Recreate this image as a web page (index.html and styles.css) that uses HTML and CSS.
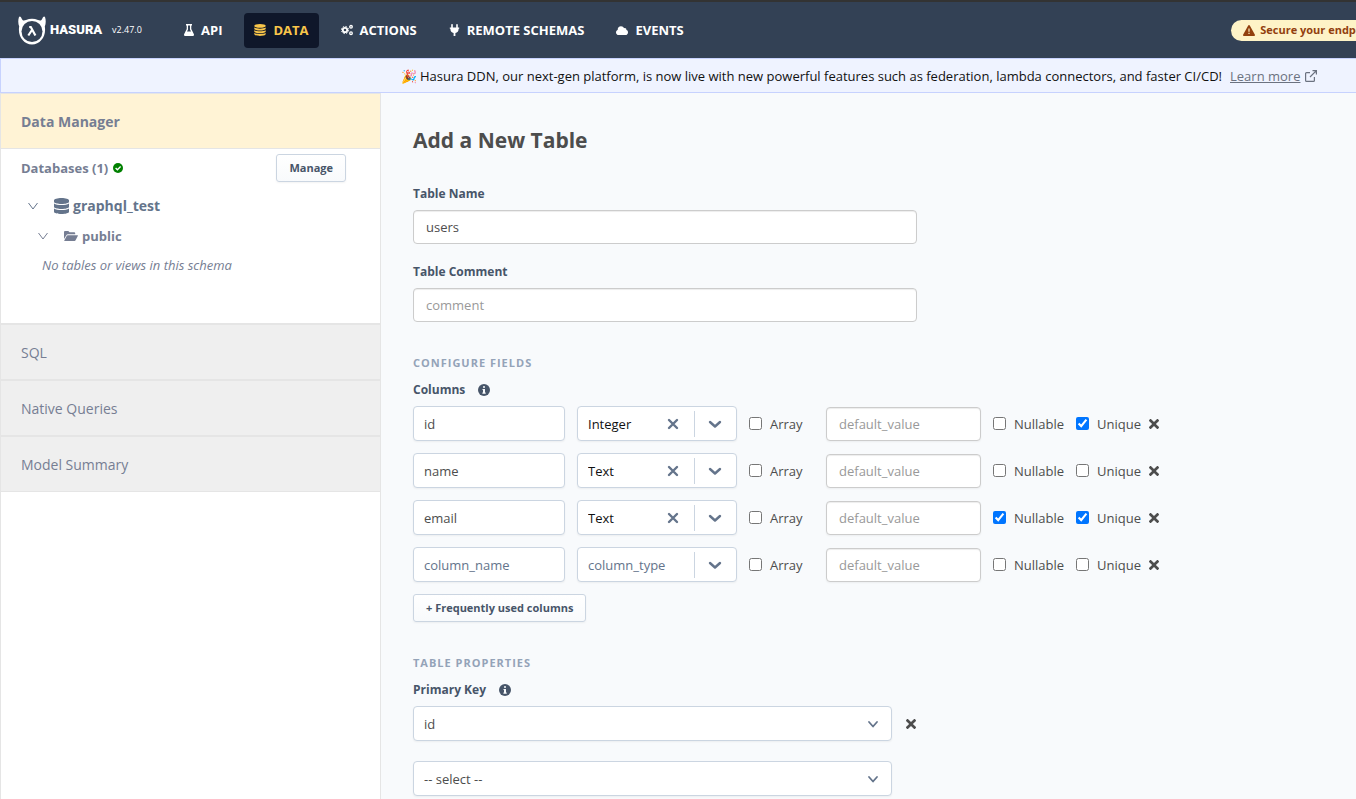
FILE: index.html
```html
<!DOCTYPE html>
<html lang="en">
<head>
  <meta charset="utf-8">
  <meta name="viewport" content="width=device-width, initial-scale=1.0">
  <title>Add Table - Data | Hasura</title>
  <link rel="stylesheet" href="styles.css">
</head>
<body>

  <!-- icons shared by the page -->
  <svg class="sprite" aria-hidden="true">
    <symbol id="times" viewBox="0 0 352 352"><path transform="translate(0 -80)" d="M242.72 256l100.07-100.07c12.28-12.28 12.28-32.19 0-44.48l-22.24-22.24c-12.28-12.28-32.19-12.28-44.48 0L176 189.28 75.93 89.21c-12.28-12.28-32.19-12.28-44.48 0L9.21 111.45c-12.28 12.28-12.28 32.19 0 44.48L109.28 256 9.21 356.07c-12.28 12.28-12.28 32.19 0 44.48l22.24 22.24c12.28 12.28 32.2 12.28 44.48 0L176 322.72l100.07 100.07c12.28 12.28 32.2 12.28 44.48 0l22.24-22.24c12.28-12.28 12.28-32.19 0-44.48L242.72 256z"/></symbol>
    <symbol id="clear" viewBox="0 0 12 12"><path d="M2 2l8 8M10 2l-8 8" fill="none" stroke="currentColor" stroke-width="2.4" stroke-linecap="round"/></symbol>
    <symbol id="chevron" viewBox="0 0 14 14"><path d="M2 5l5 4.500 5-4.500" fill="none" stroke="currentColor" stroke-width="2.400" stroke-linecap="round" stroke-linejoin="round"/></symbol>
    <symbol id="caret" viewBox="0 0 12 12"><path d="M2 4l4 4.500L10 4" fill="none" stroke="currentColor" stroke-width="1.800" stroke-linecap="round" stroke-linejoin="round"/></symbol>
    <symbol id="angle" viewBox="0 0 10 10"><path d="M.5 2L5 8l4.500-6" fill="none" stroke="currentColor" stroke-width="1"/></symbol>
    <symbol id="info" viewBox="0 0 12 12"><circle cx="6" cy="6" r="6"/><path d="M5 2.200h2v1.600H5zM4.500 4.900H7v3.500h.7v1.300H4.400V8.400H5V6.100h-.5z" fill="#f8fafc"/></symbol>
  </svg>

  <header class="topbar">
    <div class="topbar-inner">
      <a class="brand" href="#" aria-label="Hasura">
        <svg width="28" height="29" viewBox="0 0 28 29">
          <path d="M1 1c1-1.500 2.200.200 3 2.200C4.800 5 6.500 4.600 8 4c3.800-1.700 8.200-1.700 12 0 1.500.6 3.200 1 4-.800.800-2 2-3.700 3-2.200 1.100 3.200.900 6.600-.2 9.600C28.500 20 22.500 28.500 14 28.500S-.5 20 1.200 10.600C.1 7.600-.1 4.200 1 1z" fill="#fff"/>
          <circle cx="14" cy="15.500" r="10.500" fill="#334155"/>
          <path d="M11.200 11h1.600l4.600 8.500M14 14l-3.700 5.500" fill="none" stroke="#fff" stroke-width="2.200"/>
        </svg>
        <span>HASURA</span>
      </a>
      <span class="version">v2.47.0</span>
      <nav>
        <a href="#">
          <svg width="10" height="12" viewBox="0 0 10 12"><path d="M2 0h6v1.400H7.300V5L9.800 10c.5 1-.1 2-1.200 2H1.400C.3 12-.3 11 .2 10L2.700 5V1.400H2zM4 1.400v4L3 7.400h4L6 5.400v-4z" fill="#fff" fill-rule="evenodd"/></svg>
          API
        </a>
        <a class="active" href="#">
          <svg width="12" height="12" viewBox="0 0 12 12" fill="currentColor"><ellipse cx="6" cy="1.900" rx="5.700" ry="1.900"/><path d="M.3 3.500c2.500 1.500 8.900 1.500 11.400 0v1.200c0 2.400-11.400 2.400-11.400 0zM.3 6.200c2.500 1.500 8.900 1.500 11.400 0v1.200c0 2.400-11.400 2.400-11.400 0zM.3 8.900c2.500 1.500 8.900 1.500 11.400 0v1.200c0 2.500-11.400 2.500-11.400 0z"/></svg>
          DATA
        </a>
        <a href="#">
          <svg width="12" height="12" viewBox="0 0 12 12" fill="none" stroke="#fff"><circle cx="4" cy="6" r="2.200" stroke-width="1.800"/><circle cx="4" cy="6" r="3.600" stroke-width="1" stroke-dasharray="1.500 1.330"/><circle cx="10" cy="2.800" r="1.300" stroke-width="1.300"/><circle cx="10" cy="9.200" r="1.300" stroke-width="1.300"/></svg>
          ACTIONS
        </a>
        <a href="#">
          <svg width="11" height="12" viewBox="0 0 11 12"><path d="M3 0c.6 0 .8.400.8.800V3.500h3.400V.8c0-1 1.600-1 1.600 0v2.700h1.400v1.200h-.6c0 2.500-1.200 3.900-3.200 4.300V12H4.600V9C2.600 8.600 1.400 7.200 1.400 4.700H.8V3.500h1.400V.8C2.200.4 2.400 0 3 0z" fill="#fff"/></svg>
          REMOTE SCHEMAS
        </a>
        <a href="#">
          <svg width="12" height="9" viewBox="0 0 12 9"><path d="M2.700 9C1.200 9 0 7.900 0 6.400c0-1.200.7-2 1.700-2.400C1.500 1.800 3 .2 5 .2c1.500 0 2.600.8 3.100 2 1.300-.5 2.500.5 2.300 1.900C11.400 4.400 12 5.300 12 6.400 12 7.900 10.900 9 9.500 9z" fill="#fff"/></svg>
          EVENTS
        </a>
      </nav>
      <a class="secure" href="#">
        <svg width="12" height="11" viewBox="0 0 12 11"><path d="M5.200.6c.4-.8 1.200-.8 1.600 0l5 8.800c.4.700 0 1.600-.8 1.600H1c-.8 0-1.200-.9-.8-1.600z" fill="#92400e"/><path d="M5.400 3.500h1.200v3.300H5.400zM5.400 7.700h1.200v1.300H5.400z" fill="#fef3c7"/></svg>
        Secure your endpoint
      </a>
    </div>
  </header>

  <div class="banner">
    <div class="banner-inner">
      <span>🎉 Hasura DDN, our next-gen platform, is now live with new powerful features such as federation, lambda connectors, and faster CI/CD!</span>
      <a href="#">Learn more</a>
      <svg width="12" height="12" viewBox="0 0 12 12" fill="none" stroke="#6b7280" stroke-width="1.200"><path d="M7.500.6h3.900v3.900M11.400.6L5 7M5 2.600H1.600q-1 0-1 1v6.800q0 1 1 1h6.800q1 0 1-1V7"/></svg>
    </div>
  </div>

  <div class="layout">
    <aside class="sidebar">
      <a class="side-head" href="#">Data Manager</a>
      <div class="databases">
        <div class="db-title">
          <span>Databases (1)</span>
          <svg width="10" height="10" viewBox="0 0 10 10"><circle cx="5" cy="5" r="5" fill="green"/><path d="M2.600 5l1.800 1.800 3.200-3.300" fill="none" stroke="#fff" stroke-width="1.300"/></svg>
          <button class="btn manage" type="button">Manage</button>
        </div>
        <div class="tree-db">
          <svg width="10" height="10"><use href="#angle"/></svg>
          <svg class="tree-icon" width="15" height="16" viewBox="0 0 448 512" preserveAspectRatio="none" fill="#64748b"><path d="M448 73.143v45.714C448 159.143 347.667 192 224 192S0 159.143 0 118.857V73.143C0 32.857 100.333 0 224 0s224 32.857 224 73.143zM448 176v102.857C448 319.143 347.667 352 224 352S0 319.143 0 278.857V176c48.125 33.143 136.208 48.572 224 48.572S399.874 209.143 448 176zm0 160v102.857C448 479.143 347.667 512 224 512S0 479.143 0 438.857V336c48.125 33.143 136.208 48.572 224 48.572S399.874 369.143 448 336z"/></svg>
          <a href="#">graphql_test</a>
        </div>
        <div class="tree-schema">
          <svg width="10" height="10"><use href="#angle"/></svg>
          <svg class="tree-icon" width="14" height="10" viewBox="0 0 14 10" fill="#767e93"><path d="M0 8V1q0-1 1-1h3.300l1.300 1.300h4.600q1 0 1 1v1H3.800q-.9 0-1.300.7zM.3 9.400l2.500-4.600q.3-.6 1-.6h9.700q.7 0 .4.600l-2.300 4.500q-.3.600-1 .6H.6q-.5 0-.3-.5z"/></svg>
          <a href="#">public</a>
        </div>
        <p class="empty">No tables or views in this schema</p>
      </div>
      <a class="side-item" href="#">SQL</a>
      <a class="side-item" href="#">Native Queries</a>
      <a class="side-item" href="#">Model Summary</a>
    </aside>

    <main>
      <h1>Add a New Table</h1>

      <label class="label" for="table-name">Table Name</label>
      <input class="field wide" id="table-name" type="text" value="users">

      <label class="label" for="table-comment">Table Comment</label>
      <input class="field wide" id="table-comment" type="text" placeholder="comment">

      <h2>Configure Fields</h2>
      <h3>Columns <svg width="12" height="12" fill="#475569"><use href="#info"/></svg></h3>

      <div class="column-row">
        <input class="field name" type="text" value="id" aria-label="column name">
        <div class="type">
          <select aria-label="column type"><option>Integer</option></select>
          <button class="icon-btn" type="button" aria-label="Clear"><svg width="12" height="12"><use href="#clear"/></svg></button>
          <span class="arrow"><svg width="14" height="14"><use href="#chevron"/></svg></span>
        </div>
        <label class="check array"><input type="checkbox">Array</label>
        <input class="field default" type="text" placeholder="default_value" aria-label="default value">
        <label class="check"><input type="checkbox">Nullable</label>
        <label class="check"><input type="checkbox" checked>Unique</label>
        <button class="icon-btn remove" type="button" aria-label="Remove"><svg width="10" height="10"><use href="#times"/></svg></button>
      </div>

      <div class="column-row">
        <input class="field name" type="text" value="name" aria-label="column name">
        <div class="type">
          <select aria-label="column type"><option>Text</option></select>
          <button class="icon-btn" type="button" aria-label="Clear"><svg width="12" height="12"><use href="#clear"/></svg></button>
          <span class="arrow"><svg width="14" height="14"><use href="#chevron"/></svg></span>
        </div>
        <label class="check array"><input type="checkbox">Array</label>
        <input class="field default" type="text" placeholder="default_value" aria-label="default value">
        <label class="check"><input type="checkbox">Nullable</label>
        <label class="check"><input type="checkbox">Unique</label>
        <button class="icon-btn remove" type="button" aria-label="Remove"><svg width="10" height="10"><use href="#times"/></svg></button>
      </div>

      <div class="column-row">
        <input class="field name" type="text" value="email" aria-label="column name">
        <div class="type">
          <select aria-label="column type"><option>Text</option></select>
          <button class="icon-btn" type="button" aria-label="Clear"><svg width="12" height="12"><use href="#clear"/></svg></button>
          <span class="arrow"><svg width="14" height="14"><use href="#chevron"/></svg></span>
        </div>
        <label class="check array"><input type="checkbox">Array</label>
        <input class="field default" type="text" placeholder="default_value" aria-label="default value">
        <label class="check"><input type="checkbox" checked>Nullable</label>
        <label class="check"><input type="checkbox" checked>Unique</label>
        <button class="icon-btn remove" type="button" aria-label="Remove"><svg width="10" height="10"><use href="#times"/></svg></button>
      </div>

      <div class="column-row">
        <input class="field name" type="text" placeholder="column_name" aria-label="column name">
        <div class="type">
          <select class="unset" aria-label="column type"><option>column_type</option></select>
          <span class="arrow"><svg width="14" height="14"><use href="#chevron"/></svg></span>
        </div>
        <label class="check array"><input type="checkbox">Array</label>
        <input class="field default" type="text" placeholder="default_value" aria-label="default value">
        <label class="check"><input type="checkbox">Nullable</label>
        <label class="check"><input type="checkbox">Unique</label>
        <button class="icon-btn remove" type="button" aria-label="Remove"><svg width="10" height="10"><use href="#times"/></svg></button>
      </div>

      <button class="btn" type="button">+ Frequently used columns</button>

      <h2>Table Properties</h2>
      <h3>Primary Key <svg width="12" height="12" fill="#475569"><use href="#info"/></svg></h3>

      <div class="key-row">
        <div class="key">
          <select aria-label="primary key"><option>id</option></select>
          <svg width="12" height="12"><use href="#caret"/></svg>
        </div>
        <button class="icon-btn remove" type="button" aria-label="Remove"><svg width="10" height="10"><use href="#times"/></svg></button>
      </div>
      <div class="key-row">
        <div class="key">
          <select aria-label="primary key"><option>-- select --</option></select>
          <svg width="12" height="12"><use href="#caret"/></svg>
        </div>
      </div>
    </main>
  </div>

</body>
</html>
```
FILE: styles.css
```css
* {
  box-sizing: border-box;
}

body {
  margin: 0;
  min-height: 100vh;
  display: flex;
  flex-direction: column;
  overflow-x: hidden;
  font-family: "Open Sans", "Noto Sans", sans-serif;
  font-size: 13px;
  line-height: 20px;
  color: #4d4d4d;
  background: #f8fafc;
}

a {
  color: inherit;
  text-decoration: none;
}

button, input, select {
  font: inherit;
  color: inherit;
}

svg {
  flex: none;
}

.sprite {
  display: none;
}

/* top bar */
.topbar {
  background: #334155;
  border-top: 2px solid #333;
}

/* the bar keeps one line and runs past narrow windows */
.topbar-inner {
  display: flex;
  align-items: center;
  min-width: 1398px;
  height: 56px;
  padding: 0 8px 0 18px;
  color: #fff;
}

.brand {
  display: flex;
  align-items: center;
  gap: 4px;
  width: 84px;
  font-family: Roboto, sans-serif;
  font-size: 13px;
  font-weight: 900;
}

.version {
  width: 62px;
  margin-left: 10px;
  font-size: 9px;
}

.topbar nav {
  display: flex;
  gap: 12px;
}

.topbar nav a {
  display: flex;
  align-items: center;
  gap: 7px;
  height: 35px;
  padding: 0 10px;
  border-radius: 4px;
  font-weight: bold;
  white-space: nowrap;
}

.topbar nav a.active {
  color: #f9c64a;
  background: #0f172a;
}

.secure {
  display: flex;
  align-items: center;
  gap: 5px;
  height: 21px;
  margin-left: auto;
  padding: 0 12px;
  border-radius: 11px;
  font-size: 11px;
  font-weight: bold;
  white-space: nowrap;
  color: #92400e;
  background: #fef3c7;
}

/* announcement */
.banner {
  background: #eff3ff;
  border: 1px solid #c7d2fe;
  border-right: 0;
  color: #111;
}

.banner-inner {
  display: flex;
  justify-content: center;
  align-items: center;
  min-width: 1716px;
  height: 33px;
}

.banner a {
  margin: 0 5px 0 8px;
  color: #6b7280;
  text-decoration: underline;
}

/* sidebar */
.layout {
  display: flex;
  flex: 1;
}

.sidebar {
  flex: none;
  width: 381px;
  border: 1px solid #e5e5e5;
  border-width: 1px 1px 0;
  background: #fff;
  color: #767e93;
}

.side-head {
  display: block;
  padding: 18px 20px 16px;
  border-bottom: 1px solid #e5e5e5;
  font-size: 14px;
  font-weight: bold;
  background: #fff3d5;
}

.databases {
  height: 174px;
}

.db-title {
  display: flex;
  align-items: center;
  gap: 5px;
  padding: 5px 34px 0 20px;
  font-weight: bold;
}

.manage {
  margin-left: auto;
}

.tree-db, .tree-schema {
  display: flex;
  align-items: center;
  font-weight: bold;
}

.tree-db {
  padding: 14px 0 0 27px;
  font-size: 14px;
  color: #64748b;
}

.tree-schema {
  padding: 10px 0 0 37px;
}

.tree-icon {
  margin: 0 4px 0 16px;
}

.empty {
  margin: 9px 0 0 41px;
  font-style: italic;
}

.side-item {
  display: block;
  padding: 18px 20px 16px;
  border-top: 2px solid #e5e5e5;
  font-size: 14px;
  background: #efefef;
}

.side-item:last-child {
  border-bottom: 1px solid #e5e5e5;
}

/* form */
main {
  flex: 1;
  padding: 32px 32px 0;
}

h1 {
  margin: 0 0 28px;
  font-size: 21px;
  line-height: 31px;
}

.label {
  display: block;
  margin-bottom: 6px;
  font-size: 12px;
  font-weight: bold;
  color: #475569;
}

.field {
  display: block;
  height: 34px;
  padding: 0 12px;
  border: 1px solid #ccc;
  border-radius: 4px;
  background: #fff;
  box-shadow: inset 0 1px 1px rgba(0, 0, 0, .075);
}

.field::placeholder {
  color: #999;
}

.wide {
  width: 504px;
  max-width: 100%;
  margin-bottom: 18px;
}

h2 {
  margin: 31px 0 7px;
  font-size: 11px;
  line-height: 20px;
  letter-spacing: 1px;
  text-transform: uppercase;
  color: #94a3b8;
}

h3 {
  display: flex;
  align-items: center;
  gap: 13px;
  margin: 0 0 6px;
  font-size: 12px;
  line-height: 20px;
  color: #475569;
}

.column-row {
  display: flex;
  align-items: center;
  gap: 12px;
  margin-bottom: 12px;
}

.name, .type, .key {
  height: 35px;
  border: 1px solid #cbd5e1;
  border-radius: 4px;
  background: #fff;
  box-shadow: 0 1px 2px rgba(0, 0, 0, .05);
}

.name {
  width: 152px;
  padding: 0 10px;
}

.name::placeholder {
  color: #64748b;
}

.type {
  display: flex;
  align-items: center;
  width: 160px;
  color: #64748b;
}

.type select, .key select {
  flex: 1;
  min-width: 0;
  height: 33px;
  padding: 0 10px;
  border: 0;
  appearance: none;
  background: none;
}

.type select {
  color: #111;
}

.type select.unset {
  color: #64748b;
}

.arrow {
  display: flex;
  align-items: center;
  justify-content: center;
  width: 42px;
  height: 26px;
  padding-right: 2px;
  border-left: 1px solid #cbd5e1;
}

.icon-btn {
  display: flex;
  padding: 0;
  border: 0;
  background: none;
  cursor: pointer;
}

.type .icon-btn {
  margin-right: 15px;
}

.remove {
  fill: #4d4d4d;
}

.check {
  display: flex;
  align-items: center;
  gap: 8px;
}

.check input {
  width: 13px;
  height: 13px;
  margin: 0;
}

.array {
  width: 65px;
}

.default {
  width: 155px;
  box-shadow: inset 0 1px 1px rgba(0, 0, 0, .075), 0 1px 2px rgba(0, 0, 0, .05);
}

.column-row .remove {
  margin-left: -4px;
}

.btn {
  height: 28px;
  padding: 0 12px;
  border: 1px solid #cbd5e1;
  border-radius: 3px;
  font-size: 11px;
  line-height: 16px;
  font-weight: bold;
  color: #475569;
  background: linear-gradient(#fff, #f8fafc);
  box-shadow: 0 1px 2px rgba(0, 0, 0, .05);
  cursor: pointer;
}

.key-row {
  display: flex;
  align-items: center;
  gap: 14px;
  margin-bottom: 20px;
}

.key-row:last-child {
  margin-bottom: 0;
}

.key {
  display: flex;
  align-items: center;
  width: 479px;
  padding-right: 12px;
  color: #64748b;
}

.key select {
  color: #4d4d4d;
}
```
